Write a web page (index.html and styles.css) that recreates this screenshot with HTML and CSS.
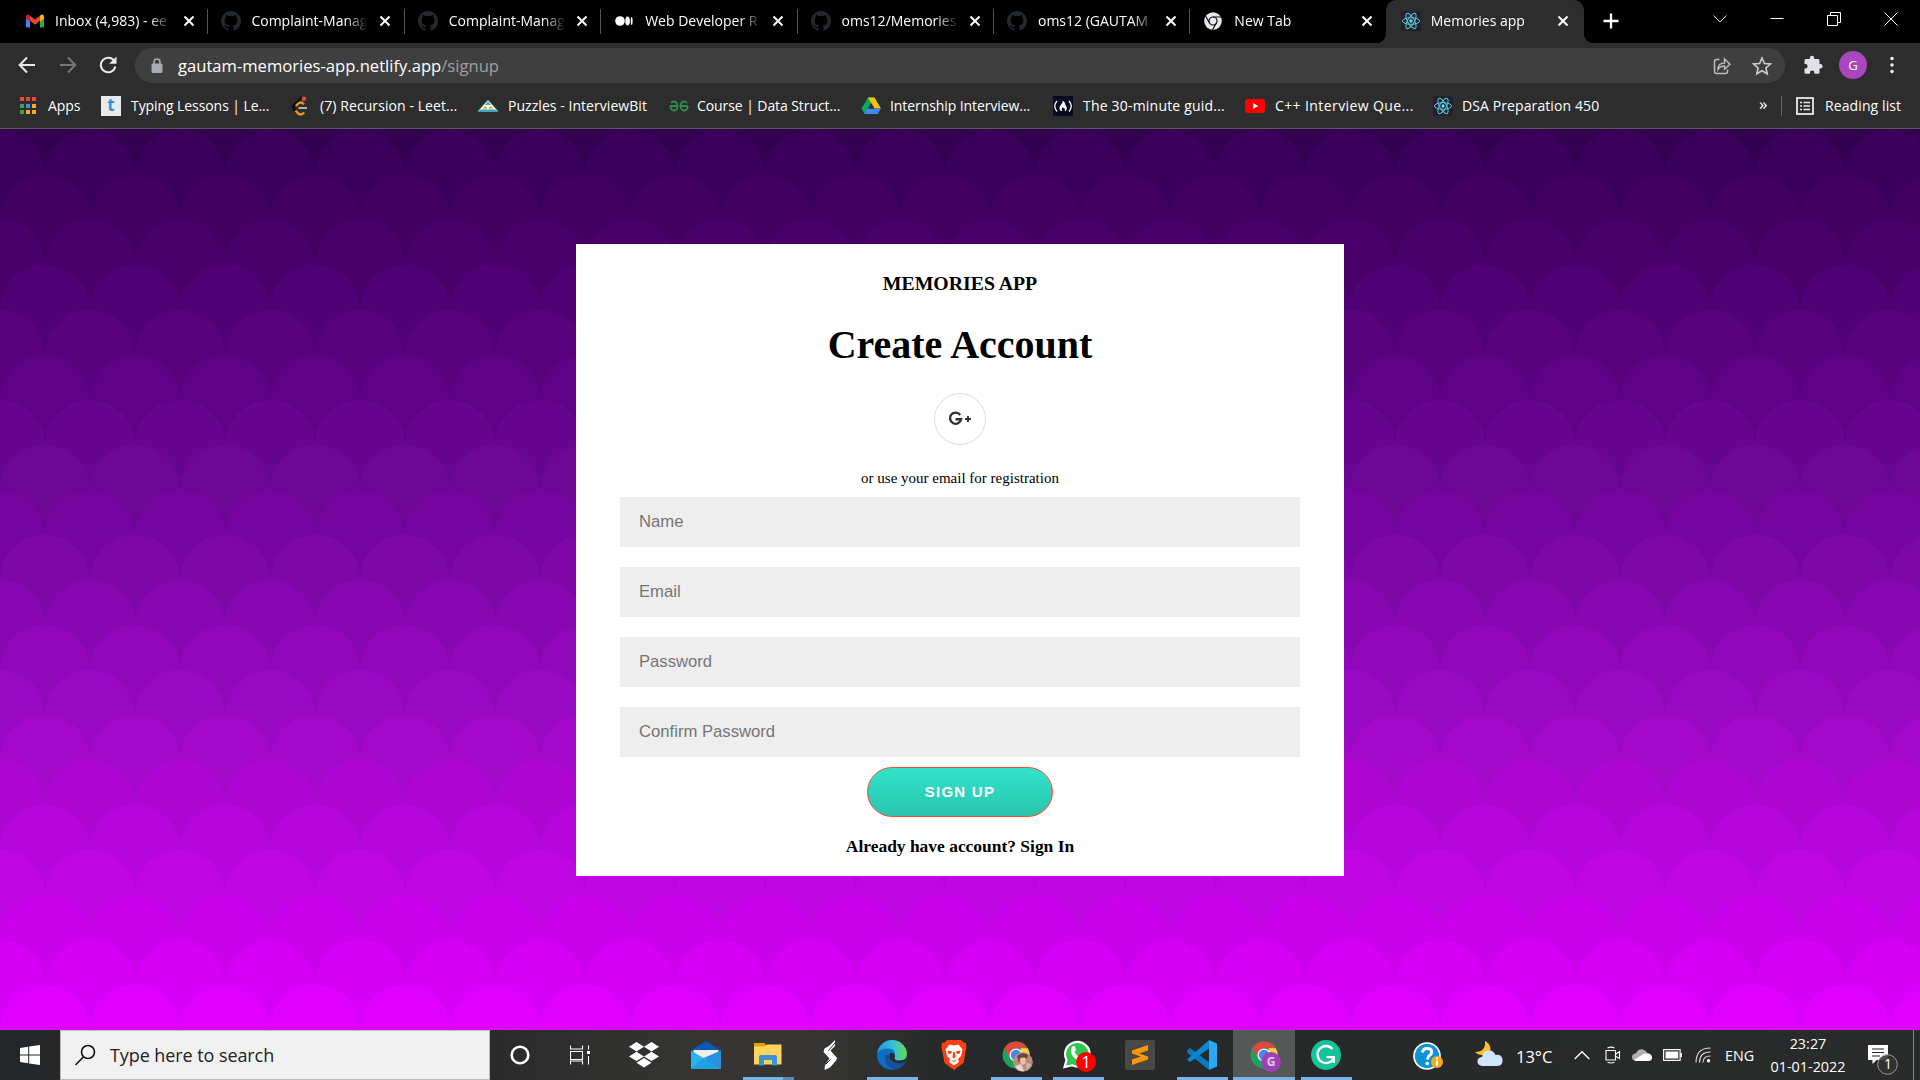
FILE: index.html
```html
<!DOCTYPE html>
<html lang="en">
<head>
<meta charset="utf-8">
<title>Memories app</title>
<link rel="stylesheet" href="styles.css">
</head>
<body>
<svg class="defs" width="0" height="0" aria-hidden="true">
  <symbol id="x" viewBox="0 0 12 12"><path d="M1.500 1.500l9 9M10.500 1.500l-9 9" stroke="#fff" stroke-width="2" fill="none"/></symbol>
  <symbol id="github" viewBox="0 0 16 16"><path fill="#24292e" d="M8 0C3.58 0 0 3.58 0 8c0 3.54 2.29 6.53 5.47 7.59.4.07.55-.17.55-.38 0-.19-.01-.82-.01-1.49-2.01.37-2.53-.49-2.69-.94-.09-.23-.48-.94-.82-1.13-.28-.15-.68-.52-.01-.53.63-.01 1.08.58 1.23.82.72 1.21 1.87.87 2.33.66.07-.52.28-.87.51-1.07-1.78-.2-3.64-.89-3.64-3.95 0-.87.31-1.59.82-2.15-.08-.2-.36-1.02.08-2.12 0 0 .67-.21 2.2.82a7.6 7.6 0 0 1 4 0c1.53-1.04 2.2-.82 2.2-.82.44 1.1.16 1.92.08 2.12.51.56.82 1.27.82 2.15 0 3.07-1.87 3.75-3.65 3.95.29.25.54.73.54 1.48 0 1.07-.01 1.93-.01 2.2 0 .21.15.46.55.38A8.01 8.01 0 0 0 16 8c0-4.42-3.58-8-8-8z"/></symbol>
  <symbol id="react" viewBox="0 0 20 20"><rect width="20" height="20" fill="#20232a"/><g fill="none" stroke="#5bc6e0" stroke-width="1"><ellipse cx="10" cy="10" rx="8.6" ry="3.3"/><ellipse cx="10" cy="10" rx="8.6" ry="3.3" transform="rotate(60 10 10)"/><ellipse cx="10" cy="10" rx="8.6" ry="3.3" transform="rotate(120 10 10)"/></g><circle cx="10" cy="10" r="1.7" fill="#61dafb"/></symbol>
  <symbol id="chrome" viewBox="0 0 30 30"><circle cx="15" cy="15" r="13.5" fill="#1da15f"/><path d="M3.3 8.2A13.5 13.5 0 0 1 26.7 8.2H15L9 18.4z" fill="#dc4a3e"/><path d="M26.7 8.2A13.5 13.5 0 0 1 14.5 28.5L21 18.4 19.5 8.2z" fill="#ffcd46"/><circle cx="15" cy="15" r="6.6" fill="#f1f1f1"/><circle cx="15" cy="15" r="5.2" fill="#4587f3"/></symbol>
</svg>

<header class="browser">
  <div class="tabs">
    <div class="tab"><svg class="fav" viewBox="0 0 18 18"><path d="M0 5v9q0 1.500 1.500 1.500H4V8z" fill="#4285f4"/><path d="M14 8v7.500h2.500Q18 15.500 18 14V5z" fill="#34a853"/><path d="M0 4.500Q0 2.500 1.800 2.500 2.600 2.500 4 3.700V9.500L0 6.500z" fill="#c5221f"/><path d="M18 4.500Q18 2.500 16.200 2.500 15.400 2.500 14 3.700V9.500l4-3z" fill="#fbbc04"/><path d="M4 3.700l5 3.800 5-3.800v5.100l-5 3.900-5-3.900z" fill="#ea4335"/></svg><span class="title">Inbox (4,983) - ee</span><svg class="close"><use href="#x"/></svg></div>
    <div class="tab"><svg class="fav gh"><use href="#github"/></svg><span class="title">Complaint-Manag</span><svg class="close"><use href="#x"/></svg></div>
    <div class="tab"><svg class="fav gh"><use href="#github"/></svg><span class="title">Complaint-Manag</span><svg class="close"><use href="#x"/></svg></div>
    <div class="tab"><svg class="fav" viewBox="0 0 18 18"><circle cx="5" cy="9" r="4.800" fill="#fff"/><ellipse cx="12.600" cy="9" rx="2.300" ry="4.500" fill="#fff"/><ellipse cx="16.700" cy="9" rx=".9" ry="4" fill="#fff"/></svg><span class="title">Web Developer R</span><svg class="close"><use href="#x"/></svg></div>
    <div class="tab"><svg class="fav gh"><use href="#github"/></svg><span class="title">oms12/Memories</span><svg class="close"><use href="#x"/></svg></div>
    <div class="tab"><svg class="fav gh"><use href="#github"/></svg><span class="title">oms12 (GAUTAM</span><svg class="close"><use href="#x"/></svg></div>
    <div class="tab last"><svg class="fav" viewBox="0 0 18 18"><circle cx="9" cy="9" r="8.800" fill="#e8eaed"/><circle cx="9" cy="9" r="4" fill="none" stroke="#111" stroke-width="1.200"/><path d="M9 5h8M5.600 11L1.700 4.300M12.400 11L8.500 17.800" stroke="#111" stroke-width="1.200"/></svg><span class="title">New Tab</span><svg class="close"><use href="#x"/></svg></div>
    <div class="tab active"><svg class="fav rx"><use href="#react"/></svg><span class="title">Memories app</span><svg class="close"><use href="#x"/></svg></div>
    <svg class="plus" viewBox="0 0 16 16"><path d="M8 .5v15M.5 8h15" stroke="#fff" stroke-width="2.300"/></svg>
    <div class="window-controls">
      <svg viewBox="0 0 14 14"><path d="M.5 3.500L7 10l6.500-6.500" stroke="#ddd" fill="none"/></svg>
      <svg viewBox="0 0 14 14"><path d="M.5 6.500h13" stroke="#fff"/></svg>
      <svg viewBox="0 0 14 14"><path d="M.5 3.500h10v10H.5zM3.500 3.500v-3h10v10h-3" stroke="#fff" fill="none"/></svg>
      <svg viewBox="0 0 14 14"><path d="M.5.5l13 13M13.500.5l-13 13" stroke="#fff"/></svg>
    </div>
  </div>

  <div class="toolbar">
    <div class="nav">
      <svg viewBox="0 0 18 18"><path d="M17 9H2M9 1.500L1.700 9 9 16.500" stroke="#e8eaed" stroke-width="2" fill="none"/></svg>
      <svg viewBox="0 0 18 18"><path d="M1 9h15M9 1.500L16.300 9 9 16.500" stroke="#777" stroke-width="2" fill="none"/></svg>
      <svg viewBox="0 0 18 18"><path d="M15.300 5A7.300 7.300 0 1 0 16.300 10.500" stroke="#e8eaed" stroke-width="2" fill="none"/><path d="M17.500.5v7.300h-7.300z" fill="#e8eaed"/></svg>
    </div>
    <div class="omnibox">
      <svg class="lock" viewBox="0 0 12 16"><rect x=".5" y="5.500" width="11" height="9.500" rx="1.500" fill="#a8abb0"/><path d="M3 6V4a3 3 0 0 1 6 0v2" stroke="#a8abb0" stroke-width="1.600" fill="none"/></svg>
      <span class="url">gautam-memories-app.netlify.app<span class="path">/signup</span></span>
      <svg class="share" viewBox="0 0 18 18"><path d="M6.500 2.500H3.500q-2 0-2 2v10q0 2 2 2h9q2 0 2-2v-2" stroke="#bdbdbd" stroke-width="1.500" fill="none"/><path d="M5 12.500Q5 6 11.500 6V2l5.500 5.200-5.500 5V9Q7 9 5 12.500z" stroke="#bdbdbd" stroke-width="1.400" fill="none"/></svg>
      <svg class="star" viewBox="0 0 20 20"><path d="M10 2l2.400 5.500 6 .5-4.500 4 1.300 5.800L10 14.700l-5.200 3.100L6.100 12 1.600 8l6-.5z" stroke="#ccc" stroke-width="1.600" fill="none"/></svg>
    </div>
    <svg class="puzzle" viewBox="0 0 20 20"><path d="M1.500 5.500q0-1.500 1.500-1.500h3.800V3a2.200 2.200 0 0 1 4.400 0v1H15q1.500 0 1.500 1.500V9h.9a2.200 2.200 0 0 1 0 4.400h-.9v3.800q0 1.500-1.500 1.500h-3.500v-.8a2.300 2.300 0 0 0-4.600 0v.8H3q-1.500 0-1.500-1.500v-3.600h.8a2.300 2.300 0 0 0 0-4.600h-.8z" fill="#dfe1e5"/></svg>
    <span class="avatar">G</span>
    <svg class="dots" viewBox="0 0 4 18"><g fill="#e8eaed"><circle cx="2" cy="2.500" r="1.800"/><circle cx="2" cy="9" r="1.800"/><circle cx="2" cy="15.500" r="1.800"/></g></svg>
  </div>

  <nav class="bookmarks">
    <a class="bm b-apps"><svg viewBox="0 0 20 20"><g fill="#ea4335"><path d="M0 1h4v4H0zM6 1h4v4H6zM12 1h4v4h-4z"/></g><path d="M0 8h4v4H0zM0 14h4v4H0z" fill="#34a853"/><path d="M6 8h4v4H6z" fill="#4285f4"/><path d="M12 8h4v4h-4zM6 14h4v4H6zM12 14h4v4h-4z" fill="#fbab19"/></svg><span>Apps</span></a>
    <a class="bm b-typing"><i class="t-icon">t</i><span>Typing Lessons | Le...</span></a>
    <a class="bm b-leet"><svg viewBox="0 0 20 20"><path d="M12 1L4.200 8.500q-2.200 2.500 0 5l2 2" stroke="#0c0c0c" stroke-width="2.200" fill="none"/><path d="M14 8.200Q11 5 8 7.800L6 10M5.500 14.500l2.700 3q3 2.300 6-1" stroke="#e79a1e" stroke-width="2.300" fill="none"/><path d="M8.500 12h8.500" stroke="#b3b3b3" stroke-width="2"/><circle cx="14" cy="2.700" r="2.300" fill="#d94b4b"/></svg><span>(7) Recursion - Leet...</span></a>
    <a class="bm b-ib"><svg viewBox="0 0 20 20"><path d="M10 4l10 11H0z" fill="#fff"/><path d="M10 5l3.200 4H6.800z" fill="#3aa9c9"/><path d="M6 10.500h3v2.500H5zM11 10.500h3l1 2.500h-4z" fill="#f5a742"/><path d="M1 13.500h18l1 2.500H0z" fill="#36a5be"/></svg><span>Puzzles - InterviewBit</span></a>
    <a class="bm b-gfg"><svg viewBox="0 0 20 20"><g fill="none" stroke="#2f8d46" stroke-width="1.800"><path d="M1 10h7.500Q8 5.500 5 5.500q-2 0-3 1.500M1.300 10Q1.600 14.500 5 14.500q3.400 0 3.600-4.500"/><path d="M19 10h-7.500Q12 14.500 15 14.500q3.600 0 3.700-4.500M11.400 10Q12 5.500 15 5.500q2 0 3 1.500"/></g></svg><span>Course | Data Struct...</span></a>
    <a class="bm b-drive"><svg viewBox="0 0 20 20"><path d="M7 1.500h6.500L6.300 14 3.500 18 .5 12.500z" fill="#0da960"/><path d="M7 1.500h6.500L20 12.500h-6.500z" fill="#ffc107"/><path d="M6.500 12.500H20L16.800 18H3.300z" fill="#4285f4"/><path d="M10.200 7.200L13.200 12.500H7.200z" fill="#2d2d2d"/></svg><span>Internship Interview...</span></a>
    <a class="bm b-fcc"><svg viewBox="0 0 20 20"><rect width="20" height="20" fill="#0a0a23"/><path d="M4 5Q-.5 10 4 15.500M16 5q4.500 5 0 10.500" stroke="#fff" stroke-width="1.300" fill="none"/><path d="M9.800 4.500q2.200 1.500 2.600 4.200 2.600 3.300.3 6.300h-1q1-2.500-1.700-3.500-2 1-.9 3.500H8q-3-2.500-.2-6Q9.800 7 9.800 4.500z" fill="#fff"/></svg><span>The 30-minute guid...</span></a>
    <a class="bm b-yt"><svg viewBox="0 0 20 20"><rect y="3" width="20" height="14" rx="3.500" fill="#f00"/><path d="M8 7l5.200 3L8 13z" fill="#fff"/></svg><span>C++ Interview Que...</span></a>
    <a class="bm b-dsa"><svg><use href="#react"/></svg><span>DSA Preparation 450</span></a>
    <span class="more">»</span>
    <i class="divider"></i>
    <a class="bm b-list"><svg viewBox="0 0 20 20"><rect x="2" y="2" width="16" height="16" fill="none" stroke="#e8eaed" stroke-width="1.800"/><path d="M5 6.500h2M5 10h2M5 13.500h2M8.500 6.500H15M8.500 10H15M8.500 13.500H15" stroke="#e8eaed" stroke-width="1.500"/></svg><span>Reading list</span></a>
  </nav>
</header>

<main class="page">
  <div class="scales">
    <i style="--b:#330051;--c:#3b005b"></i>
    <i style="--b:#3b005b;--c:#430062"></i>
    <i style="--b:#430062;--c:#4a006b"></i>
    <i style="--b:#4a006b;--c:#500175"></i>
    <i style="--b:#500175;--c:#58027d"></i>
    <i style="--b:#58027d;--c:#5f0386"></i>
    <i style="--b:#5f0386;--c:#66058e"></i>
    <i style="--b:#66058e;--c:#6e0696"></i>
    <i style="--b:#6e0696;--c:#76059f"></i>
    <i style="--b:#76059f;--c:#7e07a8"></i>
    <i style="--b:#7e07a8;--c:#8708b0"></i>
    <i style="--b:#8708b0;--c:#9008b9"></i>
    <i style="--b:#9008b9;--c:#9908c3"></i>
    <i style="--b:#9908c3;--c:#a308cb"></i>
    <i style="--b:#a308cb;--c:#ad06d3"></i>
    <i style="--b:#ad06d3;--c:#b706db"></i>
    <i style="--b:#b706db;--c:#c006e3"></i>
    <i style="--b:#c006e3;--c:#ca02ec"></i>
    <i style="--b:#ca02ec;--c:#d500f5"></i>
    <i style="--b:#d500f5;--c:#df00ff"></i>
  </div>
  <form class="card">
    <h3>MEMORIES APP</h3>
    <h1>Create Account</h1>
    <a class="social"><svg viewBox="0 0 24 16"><path d="M12.200 4A5.600 5.600 0 1 0 13.100 8.300H7.500" fill="none" stroke="#333" stroke-width="2.400"/><path d="M20 5v6M17 8h6" stroke="#333" stroke-width="1.900"/></svg></a>
    <p class="hint">or use your email for registration</p>
    <div class="fields">
      <input type="text" placeholder="Name">
      <input type="email" placeholder="Email">
      <input type="password" placeholder="Password">
      <input type="password" placeholder="Confirm Password">
    </div>
    <button type="button">SIGN UP</button>
    <p class="signin">Already have account? Sign In</p>
  </form>
</main>

<footer class="taskbar">
  <div class="start"><svg viewBox="0 0 20 20"><path d="M0 3l8.200-1.200v7.700H0zM9.200 1.600L20 0v9.500H9.200zM0 10.500h8.200v7.700L0 17zM9.200 10.500H20V20L9.200 18.400z" fill="#fff"/></svg></div>
  <div class="search"><svg viewBox="0 0 22 22"><circle cx="14" cy="8" r="6.500" fill="none" stroke="#111" stroke-width="1.600"/><path d="M9.500 12.800L1.500 21" stroke="#111" stroke-width="1.600"/></svg><span>Type here to search</span></div>
  <div class="sys"><svg viewBox="0 0 22 22"><circle cx="11" cy="11" r="8.300" fill="none" stroke="#fff" stroke-width="2.600"/></svg></div>
  <div class="sys view"><svg viewBox="0 0 20 20"><path d="M.5.5v3.500h12V.5M.5 6.500h12v8H.5zM.5 19.500V16h12v3.500M18.500.5v4M18.500 11v8.500" stroke="#fff" fill="none" stroke-width="1.100"/><path d="M17 6h3v3h-3z" fill="#fff"/></svg></div>
  <div class="apps">
    <div class="app"><svg viewBox="0 0 30 30"><path d="M7.500 2L15 6.700 7.500 11.400 0 6.700zM22.500 2L30 6.700 22.500 11.400 15 6.700zM7.500 11.700L15 16.400 7.500 21 0 16.400zM22.500 11.700L30 16.400 22.500 21 15 16.400zM15 18l7.500 4.700L15 27.400l-7.500-4.700z" fill="#fff"/></svg></div>
    <div class="app"><svg viewBox="0 0 30 30"><path d="M0 10.500L15 1l15 9.500V14H0z" fill="#0a5ab4"/><path d="M2.500 10h25v10h-25z" fill="#f0f0f0"/><path d="M0 10.500L30 28.700H0z" fill="#28b5ea"/><path d="M30 10.500V28.700L12.500 18z" fill="#2a91df"/><path d="M0 28.700L12.500 18 30 28.700z" fill="#20a1e6"/></svg></div>
    <div class="app run"><svg viewBox="0 0 30 30"><path d="M1 3h10.500l2 2.500H28V24H1z" fill="#e5a00d"/><path d="M1 6.500h11L14 4.500h14.500V24.500H1z" fill="#ffd45c"/><path d="M6 25.500V17q0-2 2-2h14q2 0 2 2v8.500h-5V20h-8v5.500z" fill="#3b92d8"/></svg><b class="split"></b></div>
    <div class="app"><svg viewBox="0 0 30 30"><path d="M20 0v6l-4.500 4.500 6.500 7.500-.5 2-6.500 7.500-5.500 2.500.5-5 4.500-6.500L8.500 12l1-3.500 5-3z" fill="#fff"/><path d="M13.500 10.500L20 3M10.500 24.500l5-5" stroke="#2f2f2e" stroke-width="1"/></svg></div>
    <div class="app run"><svg viewBox="0 0 30 30"><defs><linearGradient id="e1" x2="1"><stop offset="0" stop-color="#2595df"/><stop offset=".55" stop-color="#36c3da"/><stop offset="1" stop-color="#68dd45"/></linearGradient></defs><circle cx="15" cy="15" r="15" fill="#0c6fc3"/><path d="M.3 13A15 15 0 0 1 30 13q0 7.500-8 7.500-5.500 0-4-4Q19 9 12 8.500 4 8 .3 13z" fill="url(#e1)"/><path d="M8.500 15.500Q7 27 18 29.500q7-1.500 10-7.500-8 4-14-1-3-3-1.500-7-3.500.5-4 1.500z" fill="#174f98"/><path d="M13.500 12.500Q10 19 16.500 22q6 3 12-.500l1.500-4q-4 4-10.500 3-3-.5-1.500-4 0-3-4.500-4z" fill="#2a2b2a"/></svg></div>
    <div class="app"><svg viewBox="0 0 30 30"><path d="M8 0h14l2.500 2.500 2.500.5.500 4-3 16-9.500 7-9.500-7-3-16L3 3l2.500-.5z" fill="#fb3e14"/><path d="M15 5.500l4.500-1 4 5-1.500 6.500-3 3 1 3-5 3.500-5-3.500 1-3-3-3L6.500 9.500l4-5z" fill="#fff"/><path d="M8.500 10.500l4.500 1-.5 2-3 .5zM21.500 10.500l-4.500 1 .5 2 3 .5zM14.200 12h1.600l.7 5.500-1.500 1-1.500-1zM11.500 19l3.500 1.800 3.500-1.800-3.500 3z" fill="#fb3e14"/></svg></div>
    <div class="app run"><svg class="chr"><use href="#chrome"/></svg><svg class="mini" viewBox="0 0 20 20"><circle cx="10" cy="10" r="10" fill="#b98d7c"/><path d="M4 4q5-5 11-1l-1 4-3-2-4 1-1 5z" fill="#6a463b"/><path d="M7.500 6h5v5l-2.500 2-2.500-2z" fill="#e6bfa9"/><path d="M2 14l6-2 3 7q-6 1-9-5z" fill="#e6d8cf"/><path d="M13 11l5.500 1-4.500 6z" fill="#d9b3a3"/></svg></div>
    <div class="app run"><svg viewBox="0 0 30 30"><path d="M1.500 27L3.500 20A12.300 12.300 0 1 1 9 25.300z" fill="#2dc84d" stroke="#fff" stroke-width="2.200"/><path d="M9 7q2-2 3 0l1 3-1.500 2q2 4 5 5l2-2 3.500 2q1 4-4 4.500Q8 19 8 10q0-2 1-3z" fill="#fff"/></svg><em>1</em></div>
    <div class="app"><svg viewBox="0 0 30 30"><rect width="30" height="30" rx="2" fill="#484848"/><path d="M7 10.500L23 5v5.500l-9 3 9 3v3L7 25v-5.500l9-3-9-3z" fill="#ff9800"/></svg></div>
    <div class="app run"><svg viewBox="0 0 30 30"><path d="M22 0l8 3.500V26.500L22 30V0z" fill="#2aa9f2"/><path d="M0 10.500L3 8l19 14v8L0 12.500z" fill="#0879be"/><path d="M0 19.500L22 0v8.500L3 22 0 19.500z" fill="#0a87cf"/></svg></div>
    <div class="app run active"><svg class="chr"><use href="#chrome"/></svg><strong>G</strong></div>
    <div class="app run"><svg viewBox="0 0 30 30"><circle cx="15" cy="15" r="15" fill="#15c39a"/><path d="M21.500 9A8.500 8.500 0 1 0 23 17.500M15.500 17.200h7.300V23" fill="none" stroke="#fff" stroke-width="2.300"/></svg></div>
  </div>
  <div class="tray">
    <div class="t-help"><svg viewBox="0 0 30 30"><circle cx="14" cy="14" r="13" fill="#0d93d6" stroke="#fff" stroke-width="1.700"/><path d="M9.500 10.500Q10 6.500 14.200 6.500q4.500 0 4.500 3.600 0 2-2.200 3.400-2 1.300-2 4" fill="none" stroke="#fff" stroke-width="2.900"/><circle cx="14.300" cy="21.500" r="1.800" fill="#fff"/><circle cx="24" cy="20" r="6" fill="#f7a81b"/><path d="M24 18.500v5M24 15.500v1.800" stroke="#fff" stroke-width="2"/></svg></div>
    <div class="t-weather"><svg viewBox="0 0 28 26"><path d="M10 0q4.500 2 5.500 7 .5 6-7 7-5.500.5-8.500-3Q11 11 10 0z" fill="#fbc02d"/><path d="M7 25q-5-1-4.500-5.500Q3.500 16 7 16q1-7 7.500-6.500 4 .2 6 4.500 7-1 7 5.500 0 5-5 5.500z" fill="#cfe6fa"/></svg></div>
    <div class="t-temp">13°C</div>
    <div class="t-up"><svg viewBox="0 0 16 10"><path d="M.7 9L8 1.700 15.300 9" fill="none" stroke="#fff" stroke-width="1.400"/></svg></div>
    <div class="t-meet"><svg viewBox="0 0 16 18"><path d="M1 4.500h9.500v9.500H1zM11 8l3.500-2.500v7L11 10.500M2.500 2Q6 .2 9.500 2M2.500 16.300q3.500 1.500 7 0" fill="none" stroke="#fff" stroke-width="1.100"/></svg></div>
    <div class="t-cloud"><svg viewBox="0 0 20 13"><path d="M4 12Q0 11.500 0 8t3.800-3.600Q6.500-.5 11 .5q3 .5 4.500 3.700Q20 4.500 20 8.300 20 12 16 12z" fill="#b0b0b0"/><path d="M2 11l8-5 2-1.200q6-1.500 8 3.400Q20 12 16 12H4z" fill="#fff"/></svg></div>
    <div class="t-batt"><svg viewBox="0 0 19 12"><path d="M.6.600h16.500v10.800H.6zM18.400 4v4" fill="none" stroke="#fff" stroke-width="1.200"/><path d="M2.500 2.500h12.800v7H2.500z" fill="#fff"/></svg></div>
    <div class="t-wifi"><svg viewBox="0 0 16 16"><path d="M1 15.500Q1 1 15.500 1M4.500 15.500Q4.500 5 15.500 5M8 15.500Q8 9 15.500 9" fill="none" stroke="#ddd" stroke-width="1.100"/><circle cx="13.500" cy="13.800" r="1.800" fill="#fff"/></svg></div>
    <div class="t-eng">ENG</div>
    <div class="t-clock"><span>23:27</span><span>01-01-2022</span></div>
    <div class="t-note"><svg viewBox="0 0 32 32"><path d="M1 1h20v15H9.500l-4 4V16H1z" fill="#fff"/><path d="M5 5h12M5 8.500h12M5 12h8" stroke="#222" stroke-width="1.100"/><circle cx="20.500" cy="20.500" r="9.800" fill="#333" fill-opacity=".88" stroke="#999"/></svg><u>1</u></div>
  </div>
</footer>
</body>
</html>
```
FILE: styles.css
```css
* { box-sizing: border-box; }
body { margin: 0; width: 1920px; height: 1080px; overflow: hidden; display: flex; flex-direction: column; font-family: "Open Sans", "Noto Sans", sans-serif; font-size: 14px; color: #fff; }
svg { display: block; flex: none; }
i, em, u { font-style: normal; text-decoration: none; }
.defs { position: absolute; }

/* Browser chrome */
.browser { height: 129px; background: #2d2d2d; border-bottom: 1px solid #5b5b5b; flex: none; }
.tabs { display: flex; height: 43px; background: #000; padding-left: 12px; }
.tab { width: 196.4px; height: 43px; display: flex; align-items: center; padding: 0 0 2px 14px; position: relative; flex: none; }
.tab::after { content: ""; position: absolute; right: 0; top: 9px; width: 1px; height: 25px; background: #555; }
.tab.last::after { display: none; }
.fav { width: 18px; height: 18px; }
.fav.gh { width: 20px; height: 20px; margin: 0 -1px; }
.fav.rx { width: 20px; height: 20px; margin: 0 -1px; }
.title { width: 118px; margin-left: 11px; white-space: nowrap; -webkit-mask-image: linear-gradient(90deg, #000 80%, transparent 99%); mask-image: linear-gradient(90deg, #000 80%, transparent 99%); }
.close { width: 12px; height: 12px; margin-left: 10px; }
.tab:nth-child(n+3) .title { position: relative; left: 1px; }
.tab.active { width: 198px; background: #2d2d2d; border-radius: 10px 10px 0 0; padding-left: 16px; margin-left: -1px; }
.tab.active .title { left: 0; }
.tab.active .close { margin-left: 8px; }
.tab.active::before { content: ""; position: absolute; left: -10px; bottom: 0; width: 10px; height: 10px; background: radial-gradient(circle at 0 0, transparent 10px, #2d2d2d 10.5px); }
.tab.active::after { right: -10px; top: auto; bottom: 0; width: 10px; height: 10px; background: radial-gradient(circle at 100% 0, transparent 10px, #2d2d2d 10.5px); }
.plus { width: 16px; height: 16px; margin: 13px 0 0 19px; }
.window-controls { display: flex; gap: 43px; margin: 12px 22px 0 auto; }
.window-controls svg { width: 14px; height: 14px; }

.toolbar { display: flex; align-items: center; height: 44px; }
.nav { display: flex; gap: 22.5px; width: 135px; padding-left: 18px; }
.nav svg { width: 18px; height: 18px; }
.omnibox { width: 1650px; height: 35px; margin-top: 1px; border-radius: 18px; background: #3f3f3f; display: flex; align-items: center; padding-left: 16px; }
.lock { width: 12px; height: 16px; }
.url { margin-left: 15px; font-size: 16.6px; width: 1340px; white-space: nowrap; }
.path { color: #a0a0a0; }
.share { width: 18px; height: 18px; margin-left: 195px; }
.star { width: 20px; height: 20px; margin-left: 21px; }
.puzzle { width: 20px; height: 20px; margin-left: 18px; }
.avatar { width: 28px; height: 28px; border-radius: 50%; background: #ab47bc; margin-left: 16px; text-align: center; line-height: 28px; font-size: 13px; }
.dots { width: 4px; height: 18px; margin-left: 23px; }

.bookmarks { display: flex; align-items: center; height: 38px; padding-left: 20px; white-space: nowrap; }
.bm { display: flex; align-items: center; gap: 10px; flex: none; }
.bm svg { width: 20px; height: 20px; }
.bm span { margin-top: -2px; letter-spacing: -.08px; }
.t-icon { width: 20px; height: 20px; background: #e9eaec; color: #2b93dd; font-weight: 700; font-size: 17px; line-height: 17px; text-align: center; }
.b-apps { width: 81px; gap: 8px; }
.b-typing { width: 189px; }
.b-leet { width: 188px; }
.b-leet span { letter-spacing: .08px; }
.b-ib { width: 191px; }
.b-ib span { letter-spacing: .05px; }
.b-gfg { width: 192px; gap: 8px; }
.b-drive { width: 192px; gap: 9px; }
.b-fcc { width: 192px; }
.b-fcc span { letter-spacing: .2px; }
.b-yt { width: 188px; }
.b-yt span { letter-spacing: .4px; }
.b-dsa { width: 326px; gap: 9px; }
.b-dsa span, .b-list span { letter-spacing: .1px; }
.more { width: 22px; font-size: 17px; line-height: 20px; margin-top: -4px; }
.divider { width: 1px; height: 20px; background: #666; margin-right: 13px; }

/* Sign-up page */
.page { height: 901px; flex: none; background: #330051; padding-top: 1px; position: relative; overflow: hidden; }
.scales { position: absolute; inset: 1px 0 0; }
.scales i {
  display: block; height: 45px;
  background-color: var(--b);
  background-image: radial-gradient(circle at 45px 45px, var(--c) 44.6px, transparent 45.4px);
  background-size: 90px 45px;
}
.scales i:nth-child(odd) { background-position-x: -45px; }
.card { position: relative; width: 768px; height: 632px; margin: 114px auto 0; background: #fff; color: #000; font-family: "Liberation Serif", serif; display: flex; flex-direction: column; align-items: center; }
.card h3 { margin: 27px 0 0; font-size: 19.8px; line-height: 24px; }
.card h1 { margin: 27px 0 0; font-size: 40px; line-height: 46px; }
.social { width: 52px; height: 52px; margin-top: 25px; border: 1px solid #ddd; border-radius: 50%; display: flex; align-items: center; justify-content: center; }
.social svg { width: 24px; height: 16px; }
.hint { margin: 24px 0 0; font-size: 15px; line-height: 18px; }
.fields { display: flex; flex-direction: column; gap: 20px; margin-top: 10px; }
.fields input { width: 680px; height: 50px; border: 0; background: #eee; padding: 0 19px; font: 16.67px "Liberation Sans", sans-serif; }
.fields input::placeholder { color: #757575; }
.card button { width: 186px; height: 50px; margin-top: 10px; border: 1px solid #ff4b2b; border-radius: 25px; background: linear-gradient(#30e3ca, #2bc4ad); color: #fff; font: bold 15px "Liberation Sans", sans-serif; letter-spacing: 1.25px; padding: 0 0 2px; }
.signin { margin: 19px 0 0; font-size: 17.45px; line-height: 20px; font-weight: bold; }

/* Windows taskbar */
.taskbar { height: 50px; flex: none; display: flex; background: linear-gradient(90deg, #252729, #2b2b2b 500px, #363533 700px, #363533 820px, #262829 950px, #2a2b2b); }
.start { width: 60px; display: flex; align-items: center; justify-content: center; }
.start svg { width: 20px; height: 20px; }
.search { width: 430px; background: #f1f1f1; border: 1px solid #bbb; display: flex; align-items: center; padding-left: 13px; color: #222; font-size: 18px; gap: 14px; }
.search svg { width: 22px; height: 22px; }
.search span { letter-spacing: -.08px; }
.sys { width: 60px; display: flex; align-items: center; justify-content: center; }
.sys svg { width: 22px; height: 22px; }
.sys.view { width: 63px; padding-right: 4px; }
.sys.view svg { width: 20px; height: 20px; }
.apps { display: flex; }
.app { width: 62px; position: relative; display: flex; align-items: center; justify-content: center; }
.app svg { width: 30px; height: 30px; }
.run::after { content: ""; position: absolute; left: 6px; bottom: 0; width: 51px; height: 3px; background: #76b4ea; }
.app.active { background: #565857; }
.app.active::after { left: 0; width: 62px; }
.split { position: absolute; z-index: 1; left: 46px; bottom: 0; width: 11px; height: 3px; background: #5c89b3; }
.app .mini, .app em, .app strong { position: absolute; left: 28px; top: 22px; width: 20px; height: 20px; border-radius: 50%; }
.app em { background: #f00; font-size: 17px; line-height: 20px; text-align: center; left: 29px; }
.app strong { background: #9c42b5; font-size: 12px; line-height: 20px; text-align: center; color: #e5c9ec; }
.tray { display: flex; align-items: center; margin-left: 56px; }
.tray > div { display: flex; align-items: center; flex: none; height: 50px; }
.t-help { width: 62px; } .t-help svg { width: 30px; height: 30px; margin-top: 4px; }
.t-weather { width: 41px; } .t-weather svg { width: 28px; height: 26px; margin-top: -3px; }
.t-temp { width: 58px; font-size: 16.5px; padding-top: 2px; }
.t-up { width: 31px; } .t-up svg { width: 16px; height: 10px; }
.t-meet { width: 27px; } .t-meet svg { width: 16px; height: 18px; }
.t-cloud { width: 31px; } .t-cloud svg { width: 20px; height: 13px; }
.t-batt { width: 32px; } .t-batt svg { width: 19px; height: 12px; }
.t-wifi { width: 30px; } .t-wifi svg { width: 16px; height: 16px; }
.t-eng { width: 44px; font-size: 14.3px; padding-top: 1px; }
.tray .t-clock { width: 78px; flex-direction: column; justify-content: center; font-size: 14.4px; line-height: 23px; }
.tray .t-note { width: 67px; padding-left: 20px; position: relative; border-right: 1px solid #888; }
.t-note svg { width: 32px; height: 32px; margin-top: 10px; }
.t-note u { position: absolute; left: 37px; top: 24px; font-size: 14px; line-height: 20px; }
```
